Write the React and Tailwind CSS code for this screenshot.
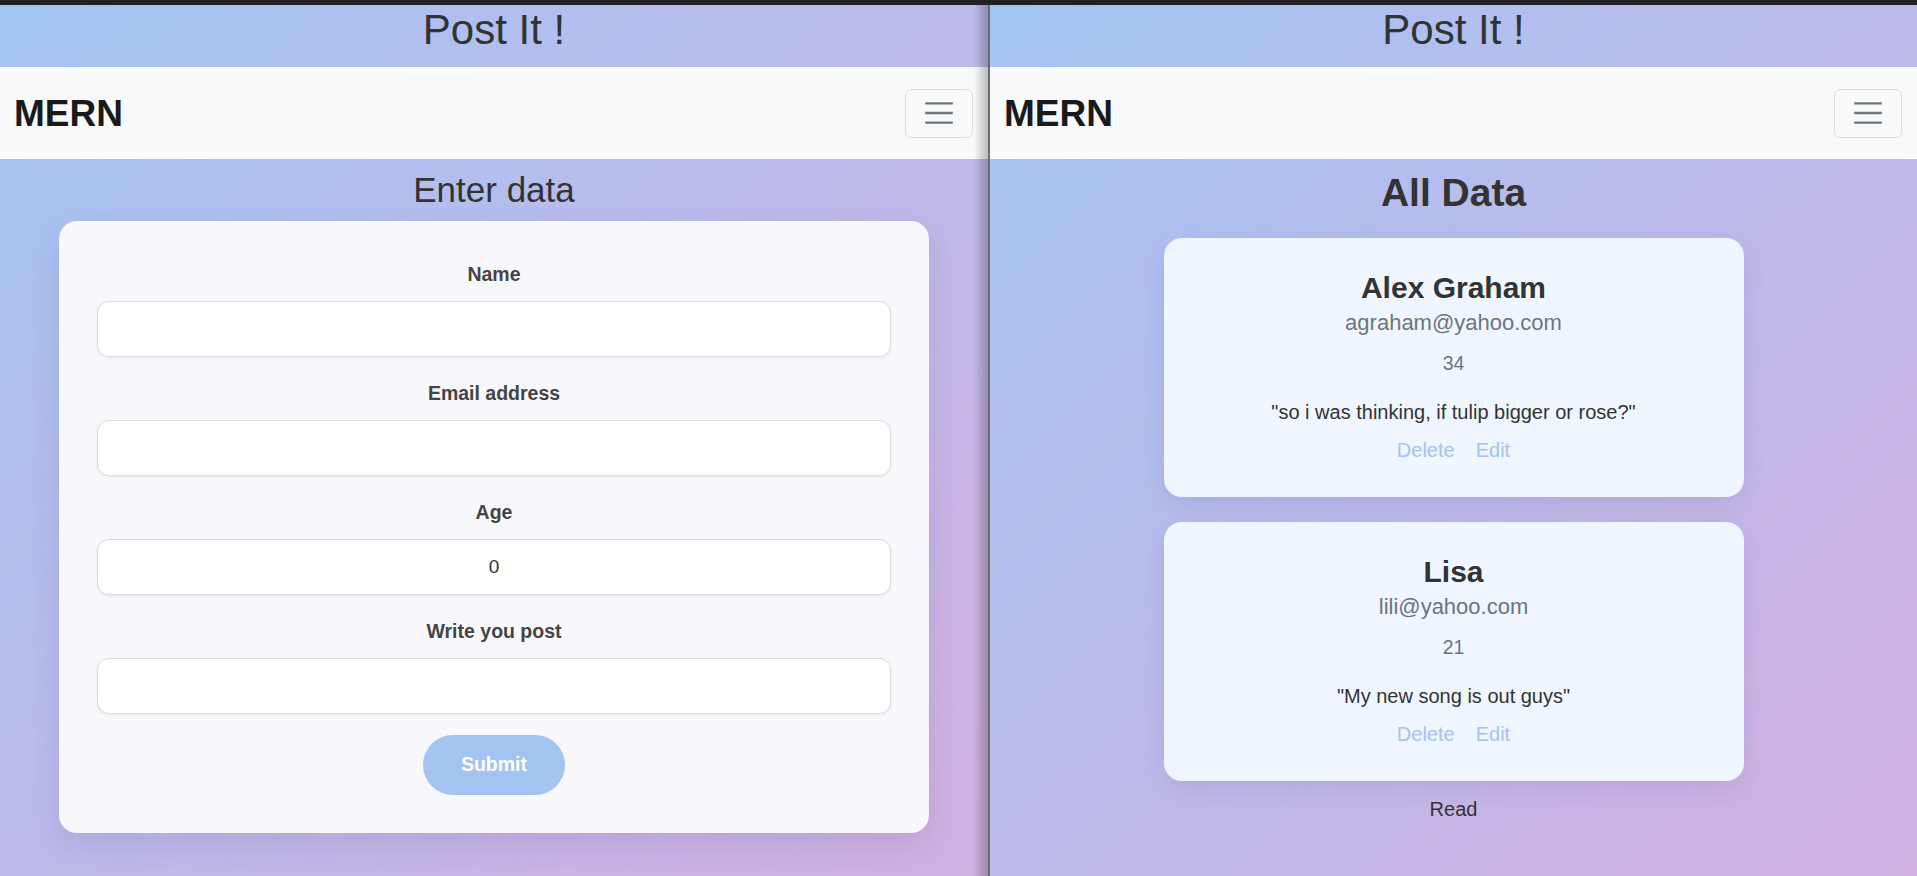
import React from 'react';

const font = "font-['Liberation_Sans',Arial,sans-serif]";

const posts = [
  { name: 'Alex Graham', email: 'agraham@yahoo.com', age: 34, post: 'so i was thinking, if tulip bigger or rose?' },
  { name: 'Lisa', email: 'lili@yahoo.com', age: 21, post: 'My new song is out guys' },
];

const TogglerIcon = () => (
  <svg width="36" height="36" viewBox="0 0 30 30" fill="none">
    <path d="M3.5 7h23M3.5 15h23M3.5 23h23" stroke="rgba(33,37,41,0.62)" strokeWidth="2" strokeLinecap="butt" />
  </svg>
);

const Navbar = () => (
  <nav className="h-[92px] bg-[#f8f9fa] flex items-center justify-between pl-[14px] pr-[15px]">
    <span className="text-[37px] font-bold text-[#1a1a1a] leading-none">MERN</span>
    <button className="w-[68px] h-[49px] border border-[#dedede] rounded-[6px] flex items-center justify-center">
      <TogglerIcon />
    </button>
  </nav>
);

const Header = () => (
  <h1 className="text-[42px] leading-[50px] text-[#333] text-center mb-[12px]">Post It !</h1>
);

const Field = ({ label, value }) => (
  <div className="flex flex-col items-center">
    <label className="text-[19.5px] leading-[29px] font-bold text-[#444] mb-[12px]">{label}</label>
    <input
      defaultValue={value}
      className="w-full h-[56px] bg-white border border-[#dcdcdc] rounded-[12px] shadow-[0_1px_3px_rgba(0,0,0,0.08)] text-center text-[19px] text-[#333] outline-none"
    />
  </div>
);

const FormPane = () => (
  <div className="relative w-[988px] bg-linear-to-br from-[#a2c4f3] to-[#d2b0e2]">
    <Header />
    <Navbar />
    <h2 className="text-[35px] leading-[42px] text-[#333] text-center mt-[10px] mb-[10px]">Enter data</h2>
    <div className="mx-[59px] bg-[#f8f8fc] rounded-[18px] shadow-[0_12px_32px_rgba(60,40,120,0.12)] px-[38px] pt-[39px] pb-[38px]">
      <div className="flex flex-col gap-[22px]">
        <Field label="Name" value="" />
        <Field label="Email address" value="" />
        <Field label="Age" value="0" />
        <Field label="Write you post" value="" />
      </div>
      <div className="flex justify-center mt-[21px]">
        <button className="w-[142px] h-[60px] rounded-full bg-[#a3c3f0] text-white font-bold text-[19.5px]">Submit</button>
      </div>
    </div>
    <div className="absolute top-0 bottom-0 right-0 w-[14px] bg-linear-to-l from-black/25 to-transparent pointer-events-none" />
  </div>
);

const PostCard = ({ item }) => (
  <div className="w-[580px] mx-auto bg-[#eff6ff] rounded-[18px] shadow-[0_8px_24px_rgba(60,40,120,0.1)] pt-[32px] pb-[32px] text-center">
    <div className="text-[30px] leading-[36px] font-bold text-[#333]">{item.name}</div>
    <div className="text-[22px] leading-[30px] text-[#6c757d] mt-[2px]">{item.email}</div>
    <div className="text-[19.5px] leading-[29px] text-[#6c757d] mt-[11px]">{item.age}</div>
    <div className="text-[20px] leading-[29px] text-[#333] mt-[20px]">"{item.post}"</div>
    <div className="text-[20px] leading-[29px] text-[#a3c3f0] mt-[9px] flex justify-center gap-[21px]">
      <span>Delete</span>
      <span>Edit</span>
    </div>
  </div>
);

const ListPane = () => (
  <div className="flex-1 bg-linear-to-br from-[#a2c4f3] to-[#d2b0e2]">
    <Header />
    <Navbar />
    <h2 className="text-[39px] leading-[47px] font-bold text-[#333] text-center mt-[10px] mb-[22px]">All Data</h2>
    <div className="flex flex-col gap-[25px]">
      {posts.map((p) => (
        <PostCard key={p.name} item={p} />
      ))}
    </div>
    <div className="text-[20px] leading-[29px] text-[#333] text-center mt-[14px]">Read</div>
  </div>
);

export default function App() {
  return (
    <div className={`${font} w-[1917px] h-[876px] flex flex-col overflow-hidden`}>
      <div className="h-[5px] bg-[#222226]" />
      <div className="flex flex-1">
        <FormPane />
        <div className="w-[2px] bg-[#6e6e6e]" />
        <ListPane />
      </div>
    </div>
  );
}
